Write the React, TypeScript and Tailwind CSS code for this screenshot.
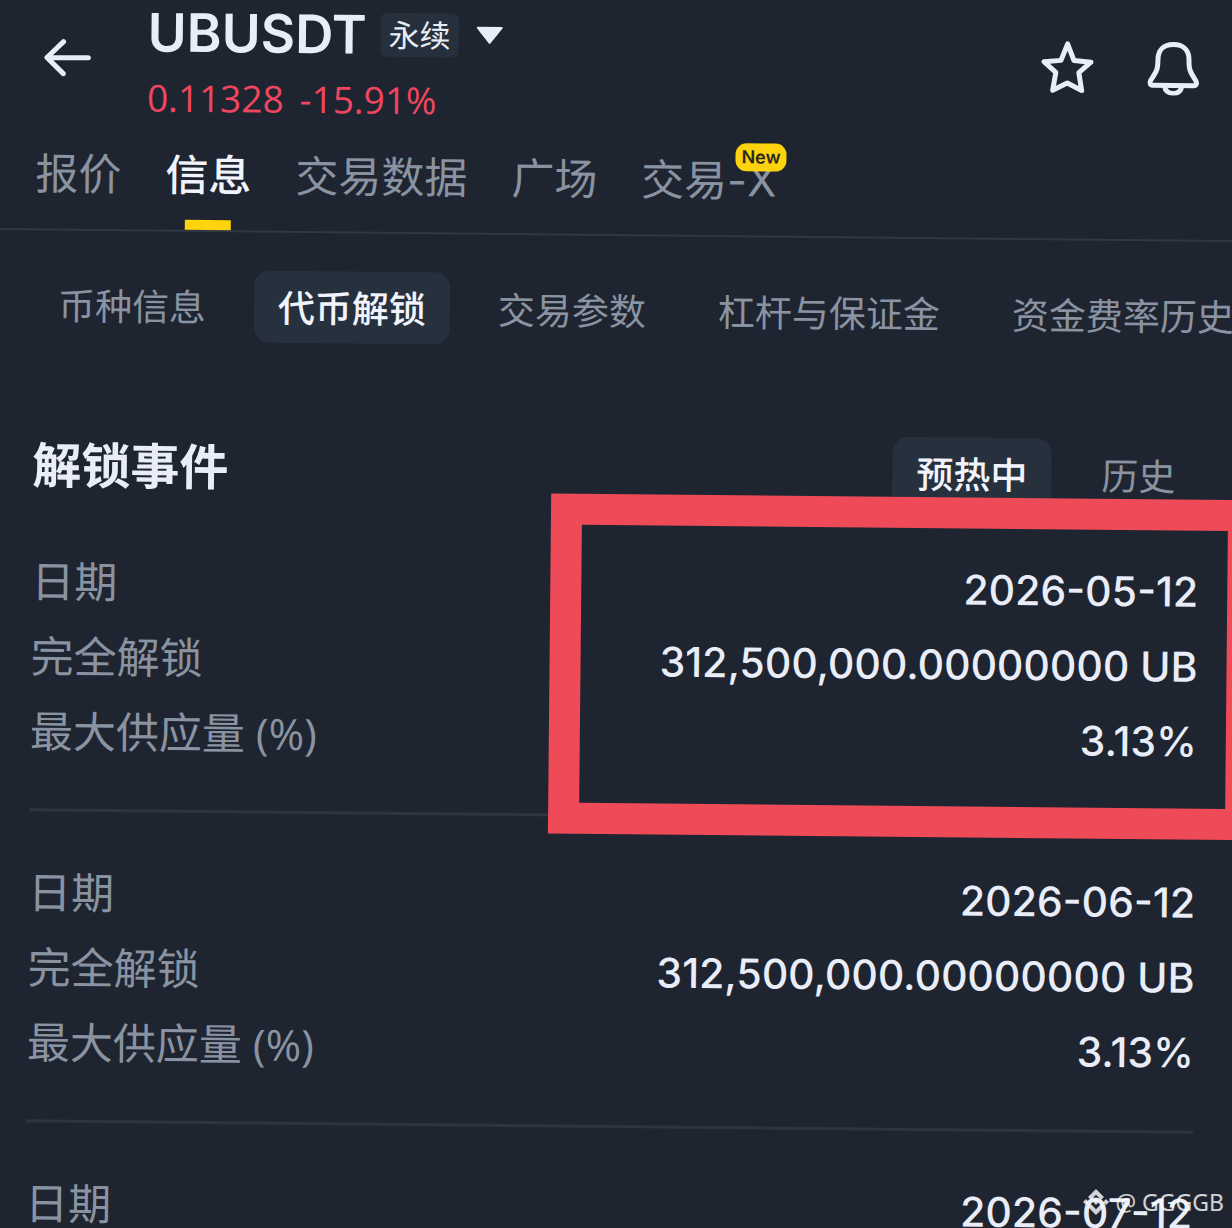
import { SiBinance } from 'react-icons/si';

const tabs = ['报价', '信息', '交易数据', '广场', '交易-X'];

const subTabs = ['币种信息', '代币解锁', '交易参数', '杠杆与保证金', '资金费率历史'];

const unlockEvents = [
    {
        highlighted: true,
        rows: [
            { label: '日期', value: '2026-05-12' },
            { label: '完全解锁', value: '312,500,000.00000000 UB' },
            { label: '最大供应量 (%)', value: '3.13%' },
        ],
    },
    {
        highlighted: false,
        rows: [
            { label: '日期', value: '2026-06-12' },
            { label: '完全解锁', value: '312,500,000.00000000 UB' },
            { label: '最大供应量 (%)', value: '3.13%' },
        ],
    },
    {
        highlighted: false,
        rows: [{ label: '日期', value: '2026-07-12' }],
    },
];

const Header = () => {
    return (
        <header className="flex h-[132px] pt-1 pl-[44px] pr-[31px] text-[#e9edf8]">
            <button aria-label="返回" className="h-[106px] w-[104px] shrink-0">
                <svg width="48" height="38" viewBox="0 0 48 38" fill="none" stroke="currentColor" strokeWidth="5" strokeLinecap="round" strokeLinejoin="round">
                    <path d="M45 19H4M20 3L3.500 19L20 35" />
                </svg>
            </button>
            <div className="flex-1">
                <div className="flex h-[54px] items-center">
                    <h1 className="font-['Inter',sans-serif] text-[53px] leading-[54px] font-semibold">UBUSDT</h1>
                    <span className="ml-[14px] h-11 rounded-md bg-[#26303c] px-2 text-[31px] leading-[44px]">永续</span>
                    <button aria-label="切换合约" className="ml-4">
                        <svg width="30" height="20" viewBox="0 0 30 20" fill="currentColor" stroke="currentColor" strokeWidth="2" strokeLinejoin="round">
                            <path d="M3 2H27L15 17Z" />
                        </svg>
                    </button>
                </div>
                <p className="mt-4 flex h-11 items-center gap-4 text-[37px] font-medium text-[#f0465f]">
                    <span>0.11328</span>
                    <span>-15.91%</span>
                </p>
            </div>
            <div className="flex h-[106px] items-center gap-[52px]">
                <button aria-label="收藏">
                    <svg width="54" height="54" viewBox="0 0 54 54" fill="none" stroke="currentColor" strokeWidth="5" strokeLinejoin="round">
                        <path d="M27 3.500L33.500 20L50.500 21.500L38.500 32L41.500 50L27 42.500L12.500 50L15.500 32L3.500 21.500L20.500 20Z" />
                    </svg>
                </button>
                <button aria-label="提醒">
                    <svg width="54" height="54" viewBox="0 0 54 54" fill="none" stroke="currentColor" strokeWidth="5" strokeLinejoin="round">
                        <path d="M27 3C16.500 3 11.500 9.500 11.500 18C11.500 26 11 29 7 35L4.500 39C3 42 4 44 6.500 44H47.500C50 44 51 42 49.500 39L47 35C43 29 42.500 26 42.500 18C42.500 9.500 37.500 3 27 3Z" />
                        <path d="M18.500 45C19 49.500 22.500 52 27 52C31.500 52 35 49.500 35.500 45" />
                    </svg>
                </button>
            </div>
        </header>
    );
};

const MainTabs = () => {
    return (
        <nav className="-mr-4 flex h-[98px] gap-[44px] border-b-2 border-[#2f3843] pl-[37px] font-['Inter','Noto_Sans_CJK_SC',sans-serif]">
            {tabs.map((tab) => (
                <button
                    key={tab}
                    className={
                        tab === '信息'
                            ? 'relative flex flex-col items-center text-[43px] leading-[82px] font-medium text-[#f1f4fc]'
                            : 'relative flex flex-col items-center text-[43px] leading-[82px] text-[#8a93a1]'
                    }
                >
                    {tab}
                    {tab === '信息' && <span className="mt-1 h-[10px] w-[46px] bg-[#fcd30c]" />}
                    {tab === '交易-X' && (
                        <span className="absolute top-1 -right-[10px] h-7 rounded-[11px] bg-[#fcd30c] px-[6px] text-[18px] leading-7 font-semibold text-[#2a2a1c]">
                            New
                        </span>
                    )}
                </button>
            ))}
        </nav>
    );
};

const SubTabs = () => {
    return (
        <nav className="mt-[38px] flex gap-6 pl-[37px] text-[37px] leading-[74px] whitespace-nowrap">
            {subTabs.map((tab) => (
                <button
                    key={tab}
                    className={
                        tab === '代币解锁'
                            ? 'h-[72px] shrink-0 rounded-2xl bg-[#27313d] px-6 font-medium text-[#f1f4fc]'
                            : 'h-[72px] shrink-0 rounded-2xl px-6 text-[#8a93a1]'
                    }
                >
                    {tab}
                </button>
            ))}
        </nav>
    );
};

const UnlockEvents = () => {
    return (
        <section className="mt-[88px] pl-[37px] pr-7">
            <div className="flex h-[72px] items-center justify-between">
                <h2 className="text-[49px] leading-[74px] font-bold text-[#e9edf8]">解锁事件</h2>
                <div className="flex gap-[26px] text-[37px] leading-[74px]">
                    <button className="h-[72px] rounded-2xl bg-[#27313d] px-6 font-medium text-[#f1f4fc]">预热中</button>
                    <button className="h-[72px] px-6 text-[#8a93a1]">历史</button>
                </div>
            </div>
            {unlockEvents.map((event, index) => (
                <article key={index} className="relative border-b-3 border-[#2b3540] pt-[43px] pb-10">
                    <dl>
                        {event.rows.map((row) => (
                            <div key={row.label} className="flex h-[75px] items-center justify-between">
                                <dt className="text-[43px] leading-[75px] text-[#8a93a1]">{row.label}</dt>
                                <dd className="font-['Inter',sans-serif] text-[41px] leading-[75px] font-medium text-[#e9edf8]">{row.value}</dd>
                            </div>
                        ))}
                    </dl>
                    {event.highlighted && (
                        <div className="absolute -top-3 -right-[60px] h-[340px] w-[708px] border-[31px] border-[#ef4a58]" />
                    )}
                </article>
            ))}
        </section>
    );
};

export default function App() {
    return (
        <div className="relative h-screen overflow-hidden bg-[#1f2530] font-['Open_Sans','Noto_Sans_CJK_SC',sans-serif]">
            <main className="origin-top-left rotate-[0.56deg]">
                <Header />
                <MainTabs />
                <SubTabs />
                <UnlockEvents />
            </main>
            <div className="absolute right-2 bottom-2 flex items-center gap-[6px] font-['Noto_Sans',sans-serif] text-[23px] leading-9 text-white/80">
                <SiBinance size={26} />
                <span>@ GGGGB</span>
            </div>
        </div>
    );
}
